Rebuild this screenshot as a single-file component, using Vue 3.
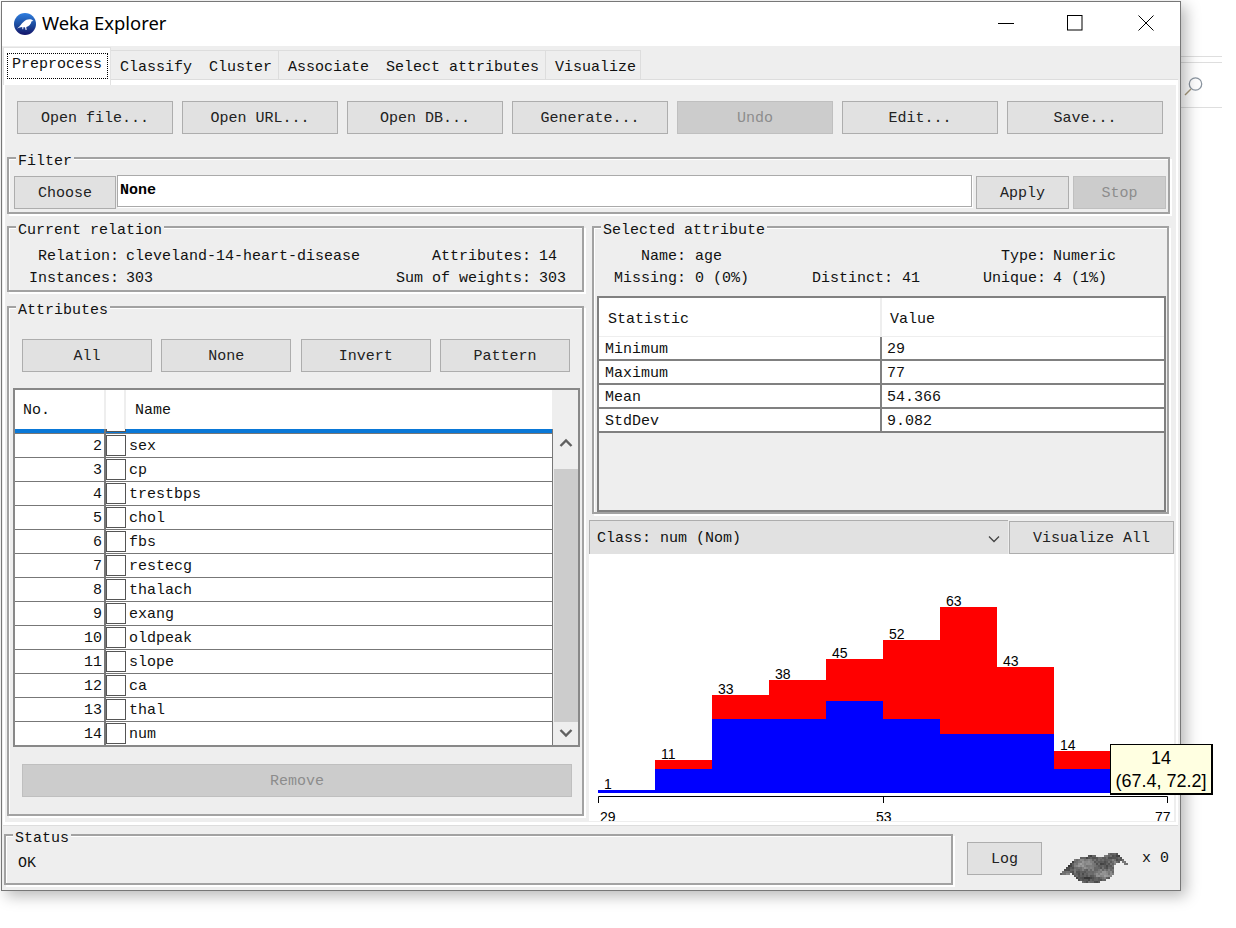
<script setup>
const tabs = [
  { name: 'Classify', cls: 't1' },
  { name: 'Cluster', cls: 't2' },
  { name: 'Associate', cls: 't3' },
  { name: 'Select attributes', cls: 't4' },
  { name: 'Visualize', cls: 't5' },
]
const tools = ['Open file...', 'Open URL...', 'Open DB...', 'Generate...', 'Undo', 'Edit...', 'Save...']
const attrBtns = ['All', 'None', 'Invert', 'Pattern']
const attrs = ['age', 'sex', 'cp', 'trestbps', 'chol', 'fbs', 'restecg', 'thalach', 'exang', 'oldpeak', 'slope', 'ca', 'thal', 'num']
const stats = [['Minimum', '29'], ['Maximum', '77'], ['Mean', '54.366'], ['StdDev', '9.082']]
const bars = [
  { x: 598, red: 790, blue: 790, n: 1 },
  { x: 655, red: 760, blue: 769, n: 11 },
  { x: 712, red: 695, blue: 719, n: 33 },
  { x: 769, red: 680, blue: 719, n: 38 },
  { x: 826, red: 659, blue: 701, n: 45 },
  { x: 883, red: 640, blue: 719, n: 52 },
  { x: 940, red: 607, blue: 734, n: 63 },
  { x: 997, red: 667, blue: 734, n: 43 },
  { x: 1054, red: 751, blue: 769, n: 14 },
  { x: 1111, red: 769, blue: 769, n: '' },
]
const spans = [
  [1, [[48, 58]]],
  [3, [[28, 36], [44, 60]]],
  [5, [[20, 62]]],
  [7, [[14, 64]]],
  [9, [[12, 60], [62, 66]]],
  [11, [[10, 56], [64, 68]]],
  [13, [[8, 54]]],
  [15, [[6, 54]]],
  [17, [[4, 54]]],
  [19, [[2, 54]]],
  [21, [[0, 10], [12, 54]]],
  [23, [[14, 52]]],
  [25, [[16, 50]]],
  [27, [[18, 46]]],
  [29, [[22, 40]]],
]
const pixels = []
let seed = 12345
const rnd = () => {
  seed = (seed * 1103515245 + 12345) & 0x7fffffff
  return seed / 0x7fffffff
}
spans.forEach(([y, parts]) => {
  parts.forEach(([a, b]) => {
    for (let x = a; x < b; x += 2) {
      const low = Math.sin(x * 0.16 + 1) * Math.cos(y * 0.28) * 32
      const dark = x < 14 || x > 54 || y > 24 || y < 6 ? -22 : 0
      const g = Math.round(112 + low + dark + (rnd() - 0.5) * 42)
      pixels.push({ x, y, fill: `rgb(${g},${g},${g})` })
    }
  })
})
</script>

<template>
  <div class="root">
    <div class="bg-line l1"></div>
    <div class="bg-line l2"></div>
    <div class="bg-line l3"></div>
    <svg class="bg-search" viewBox="0 0 22 22" width="22" height="22" fill="none">
      <circle cx="12.5" cy="9" r="6.2" stroke="#8b95a0" stroke-width="1.3" />
      <path d="M8 14 L2 20" stroke="#a89a7c" stroke-width="1.5" />
    </svg>

    <div class="window">
      <header class="titlebar">
        <svg class="logo" viewBox="0 0 22 22" width="22" height="22">
          <defs>
            <linearGradient id="lg" x1="0" y1="0" x2="0" y2="1">
              <stop offset="0" stop-color="#2f7ee0" />
              <stop offset="0.55" stop-color="#1c4a9c" />
              <stop offset="1" stop-color="#14146a" />
            </linearGradient>
          </defs>
          <circle cx="11" cy="11" r="11" fill="url(#lg)" />
          <path d="M3 15.5 C6 14 7 10.5 10 8.5 C12 6.5 15 5.8 17.5 6.6 L19.5 8 L17.6 8.2 C17 11 15 13.4 12.3 14 L12.6 17 L11.6 17 L11 14.3 L9.4 14.2 L9.2 16.2 L8.4 16.2 L8.2 14 C6.5 14.2 5 14.8 3 15.5 Z" fill="#fff" />
        </svg>
        <span class="title">Weka Explorer</span>
        <div class="controls">
          <div class="ctl"><svg width="16" height="16" viewBox="0 0 16 16"><path d="M0 8.5H16" stroke="#000" /></svg></div>
          <div class="ctl mid"><svg width="16" height="16" viewBox="0 0 16 16"><rect x="0.5" y="0.5" width="14.5" height="14.5" fill="none" stroke="#000" /></svg></div>
          <div class="ctl last"><svg width="16" height="16" viewBox="0 0 16 16"><path d="M0.5 0.5L15.5 15.5M15.5 0.5L0.5 15.5" stroke="#000" /></svg></div>
        </div>
      </header>

      <nav class="tabs">
        <div class="tab-active"><span class="focus">Preprocess</span></div>
        <div v-for="t in tabs" :key="t.name" class="tab" :class="t.cls">{{ t.name }}</div>
      </nav>

      <main class="panel">
        <div class="toolbar">
          <button v-for="t in tools" :key="t" class="btn tool" :disabled="t === 'Undo'">{{ t }}</button>
        </div>

        <section class="group filter">
          <span class="legend">Filter</span>
          <button class="btn choose">Choose</button>
          <div class="filter-input">None</div>
          <button class="btn apply">Apply</button>
          <button class="btn apply" disabled>Stop</button>
        </section>

        <div class="columns">
          <div class="col-left">
            <section class="group relation">
              <span class="legend">Current relation</span>
              <div class="info rel-grid">
                <span class="k">Relation:</span><span class="v">cleveland-14-heart-disease</span>
                <span class="k">Attributes:</span><span class="v2">14</span>
                <span class="k">Instances:</span><span class="v">303</span>
                <span class="k">Sum of weights:</span><span class="v2">303</span>
              </div>
            </section>

            <section class="group attributes">
              <span class="legend">Attributes</span>
              <div class="attr-btns">
                <button v-for="b in attrBtns" :key="b" class="btn attr-btn">{{ b }}</button>
              </div>
              <div class="attr-table">
                <div class="attr-main">
                  <div class="attr-head">
                    <span class="h-no">No.</span>
                    <span class="h-check"></span>
                    <span class="h-name">Name</span>
                  </div>
                  <div class="attr-rows">
                    <div v-for="(a, i) in attrs" :key="a" class="attr-row" :class="{ selected: i === 0 }">
                      <span class="no">{{ i + 1 }}</span>
                      <span class="check"><i></i></span>
                      <span class="name">{{ a }}</span>
                    </div>
                  </div>
                </div>
                <div class="scrollbar">
                  <svg width="14" height="10" viewBox="0 0 14 10" class="arrow up"><path d="M1.5 8L7 2.5L12.5 8" fill="none" stroke="#606060" stroke-width="2.4" /></svg>
                  <div class="thumb"></div>
                  <svg width="14" height="10" viewBox="0 0 14 10" class="arrow down"><path d="M1.5 2L7 7.5L12.5 2" fill="none" stroke="#606060" stroke-width="2.4" /></svg>
                </div>
              </div>
              <button class="btn remove" disabled>Remove</button>
            </section>
          </div>

          <div class="col-right">
            <section class="group selected-attr">
              <span class="legend">Selected attribute</span>
              <div class="info sel-grid">
                <span class="k">Name:</span><span class="v">age</span><span></span>
                <span class="k">Type:</span><span class="v2">Numeric</span>
                <span class="k">Missing:</span><span class="v">0 (0%)</span><span>Distinct: 41</span>
                <span class="k">Unique:</span><span class="v2">4 (1%)</span>
              </div>
              <div class="stats">
                <div class="stats-head"><span class="sh1">Statistic</span><span class="sh2">Value</span></div>
                <div v-for="s in stats" :key="s[0]" class="stats-row">
                  <span class="s1">{{ s[0] }}</span><span class="s2">{{ s[1] }}</span>
                </div>
              </div>
            </section>

            <div class="class-row">
              <div class="combo">
                <span>Class: num (Nom)</span>
                <svg width="12" height="8" viewBox="0 0 12 8"><path d="M1 1.5L6 6.5L11 1.5" fill="none" stroke="#444" stroke-width="1.3" /></svg>
              </div>
              <button class="btn vis-all">Visualize All</button>
            </div>

            <div class="chart">
              <svg viewBox="589 554 585 267" width="585" height="267">
                <g v-for="b in bars" :key="b.x">
                  <rect :x="b.x" :y="b.red" width="57" :height="793 - b.red" fill="#f00" />
                  <rect :x="b.x" :y="b.blue" width="57" :height="793 - b.blue" fill="#00f" />
                  <text :x="b.x + 6" :y="b.red - 1" class="num">{{ b.n }}</text>
                </g>
                <path d="M598.5 803V796.5H1167.5V803M883.5 796.5V803" fill="none" stroke="#000" />
                <text x="600" y="822" class="num">29</text>
                <text x="876" y="822" class="num">53</text>
                <text x="1155" y="822" class="num">77</text>
              </svg>
            </div>
          </div>
        </div>
      </main>

      <footer class="statusbar">
        <section class="group status">
          <span class="legend">Status</span>
          <div class="status-text">OK</div>
        </section>
        <button class="btn log">Log</button>
        <svg class="bird" width="68" height="32" viewBox="0 0 68 32">
          <rect v-for="(p, i) in pixels" :key="i" :x="p.x" :y="p.y" width="2" height="2" :fill="p.fill" />
        </svg>
        <span class="count">x 0</span>
      </footer>

      <div class="tooltip">
        <div>14</div>
        <div>(67.4, 72.2]</div>
      </div>
    </div>
  </div>
</template>

<style>
html, body { margin: 0; background: #fff; }
</style>

<style scoped>
* { box-sizing: border-box; }
.root {
  position: relative;
  width: 1236px;
  height: 928px;
  overflow: hidden;
  background: #fff;
  font: 15px/18px "Liberation Mono", monospace;
  color: #111;
}
.bg-line { position: absolute; left: 1180px; width: 42px; height: 1px; background: #dedede; }
.l1 { top: 56px; }
.l2 { top: 62px; }
.l3 { top: 107px; }
.bg-search { position: absolute; left: 1183px; top: 75px; }

.window {
  position: relative;
  margin: 1px 0 0 1px;
  width: 1180px;
  height: 890px;
  border: 1px solid #777;
  background: #eee;
  box-shadow: 5px 5px 14px rgba(0, 0, 0, 0.28);
  display: flex;
  flex-direction: column;
}

.titlebar { height: 44px; background: #fff; display: flex; align-items: center; flex: none; }
.logo { margin-left: 12px; }
.title { margin: -2px 0 0 6px; font: 18.4px/24px "Noto Sans", sans-serif; color: #000; }
.controls { margin-left: auto; display: flex; }
.ctl { width: 70px; height: 44px; padding-bottom: 2px; display: flex; align-items: center; justify-content: center; }
.ctl.mid { padding-right: 2px; }
.ctl.last { width: 69px; }

.tabs { height: 34px; display: flex; align-items: flex-end; padding-left: 1px; flex: none; position: relative; }
.tab-active {
  width: 108px;
  height: 38px;
  margin-bottom: -5px;
  background: #fff;
  border: 1px solid #e2e2e2;
  border-bottom: 0;
  padding: 5px 2px 0 3px;
  position: relative;
  z-index: 2;
}
.focus {
  display: block;
  width: 101px;
  height: 26px;
  border: 1px dotted #000;
  line-height: 22px;
  padding-left: 4px;
}
.tab { height: 30px; border-top: 1px solid #ddd; border-bottom: 1px solid #ddd; line-height: 33px; padding-left: 9px; }
.t1 { width: 89px; }
.t2 { width: 79px; border-right: 1px solid #ddd; }
.t3 { width: 98px; }
.t4 { width: 169px; border-right: 1px solid #ddd; }
.t5 { width: 95px; border-right: 1px solid #ddd; }

.panel {
  margin-left: 1px;
  width: 1175px;
  height: 745px;
  flex: none;
  background: #eee;
  border: solid #fff;
  border-width: 5px 2px 3px;
  box-shadow: 0 -1px 0 #ddd, 0 1px 0 #ddd;
}

.btn {
  font: inherit;
  color: #222;
  height: 33px;
  padding: 2px 0 0;
  background: #e1e1e1;
  border: 1px solid #adadad;
  flex: none;
}
.btn:disabled { background: #ccc; color: #8c8c8c; border-color: #bfbfbf; }

.toolbar { display: flex; gap: 9px; margin: 16px 0 0 12px; }
.tool { width: 156px; }

.group {
  position: relative;
  border: 2px solid #a2a2a2;
  box-shadow: inset 1px 1px 0 #fff, 2px 2px 0 #fff;
}
.legend {
  position: absolute;
  top: -6px;
  left: 7px;
  padding: 0 2px;
  background: #eee;
  line-height: 18px;
  white-space: pre;
}

.filter {
  margin: 23px 0 0 2px;
  width: 1163px;
  height: 57px;
  display: flex;
  align-items: flex-start;
  padding: 17px 0 0 5px;
}
.choose { width: 102px; }
.filter-input {
  flex: none;
  width: 855px;
  height: 32px;
  margin: -1px 4px 0 1px;
  background: #fff;
  border: 1px solid #aaa;
  padding: 6px 0 0 2px;
  font-weight: 700;
  color: #000;
  box-shadow: 1px 1px 0 #fff;
}
.apply { width: 93px; margin-right: 4px; }

.columns { display: grid; grid-template-columns: 577px 585px; column-gap: 5px; margin: 12px 0 0 2px; }
.col-left, .col-right { display: flex; flex-direction: column; }

.relation { height: 66px; }
.info { display: grid; grid-auto-rows: 22px; line-height: 22px; white-space: pre; }
.k { text-align: right; }
.rel-grid { grid-template-columns: 110px 277px 135px auto; padding-top: 18px; }
.rel-grid .v { padding-left: 7px; }
.rel-grid .v2 { padding-left: 8px; }

.attributes { margin-top: 14px; height: 510px; }
.attr-btns { display: flex; justify-content: space-between; width: 548px; margin: 31px 0 0 13px; }
.attr-btn { width: 130px; }
.attr-table {
  margin: 16px 0 0 4px;
  width: 567px;
  height: 359px;
  border: 2px solid #888;
  display: flex;
  background: #eee;
}
.attr-main { width: 538px; flex: none; display: flex; flex-direction: column; }
.attr-head { height: 39px; display: flex; flex: none; line-height: 42px; background: #fff; width: 537px; }
.h-no { width: 89px; padding-left: 8px; }
.h-check { width: 22px; border-left: 2px solid #eee; border-right: 2px solid #eee; }
.h-name { padding-left: 9px; }
.attr-rows { height: 316px; overflow: hidden; border-right: 1px solid #777; }
.attr-row {
  height: 24px;
  display: flex;
  background: #fff;
  border-bottom: 1px solid #777;
  line-height: 25px;
}
.attr-row.selected { margin-top: -19px; background: #0a78d7; color: #fff; }
.no { width: 89px; text-align: right; padding-right: 2px; flex: none; }
.check { width: 23px; flex: none; border-left: 2px solid #777; padding-top: 1px; }
.check i { display: block; width: 20px; height: 21px; background: #fff; border: 1.5px solid #555; }
.name { padding-left: 2px; }
.scrollbar { flex: 1; display: flex; flex-direction: column; align-items: center; position: relative; }
.arrow { flex: none; }
.up { margin-top: 48px; }
.thumb { width: 24px; height: 253px; background: #ccc; margin-top: 21px; margin-left: 1px; flex: none; }
.down { margin-top: 6px; }
.remove { width: 550px; margin: 17px 0 0 13px; display: block; }

.selected-attr { margin-left: 3px; width: 577px; height: 288px; }
.sel-grid { grid-template-columns: 92px 126px 171px 63px auto; padding-top: 18px; }
.sel-grid .v { padding-left: 9px; }
.sel-grid .v2 { padding-left: 7px; }
.stats {
  margin: 6px 0 0 3px;
  width: 569px;
  height: 216px;
  border: 2px solid #808080;
}
.stats-head { display: flex; height: 39px; background: #fff; border-bottom: 1px solid #eee; line-height: 43px; width: 565px; }
.sh1 { width: 283px; padding-left: 9px; border-right: 2px solid #eee; }
.sh2 { padding-left: 8px; }
.stats-row { display: flex; height: 24px; line-height: 26px; background: #fff; border-bottom: 2px solid #808080; }
.s1 { width: 283px; padding-left: 6px; border-right: 2px solid #808080; flex: none; }
.s2 { padding-left: 5px; }

.class-row { display: flex; align-items: flex-end; gap: 1px; margin-top: 6px; height: 34px; }
.combo {
  width: 419px;
  height: 34px;
  background: #e1e1e1;
  border-top: 1px solid #adadad;
  border-left: 1px solid #adadad;
  padding: 2px 8px 0 7px;
  display: flex;
  align-items: center;
  justify-content: space-between;
}
.vis-all { width: 165px; }
.chart { height: 267px; background: #fff; overflow: hidden; }
.chart svg { display: block; }
.num { font: 14px "Liberation Sans", sans-serif; fill: #000; }

.statusbar { display: flex; align-items: flex-start; flex: none; height: 64px; }
.status { margin: 9px 0 0 2px; width: 949px; height: 51px; }
.status-text { padding: 19px 0 0 12px; }
.log { width: 75px; margin: 17px 0 0 14px; }
.bird { margin: 27px 0 0 18px; flex: none; }
.count { margin: 25px 0 0 14px; }

.tooltip {
  position: absolute;
  left: 1108px;
  top: 742px;
  width: 103px;
  height: 51px;
  background: #ffffe1;
  border: 1px solid #000;
  border-width: 1px 2px 2px 1px;
  font: 18px/23px "Liberation Sans", sans-serif;
  padding-top: 2px;
  color: #000;
  text-align: center;
  white-space: nowrap;
  z-index: 5;
}
</style>
